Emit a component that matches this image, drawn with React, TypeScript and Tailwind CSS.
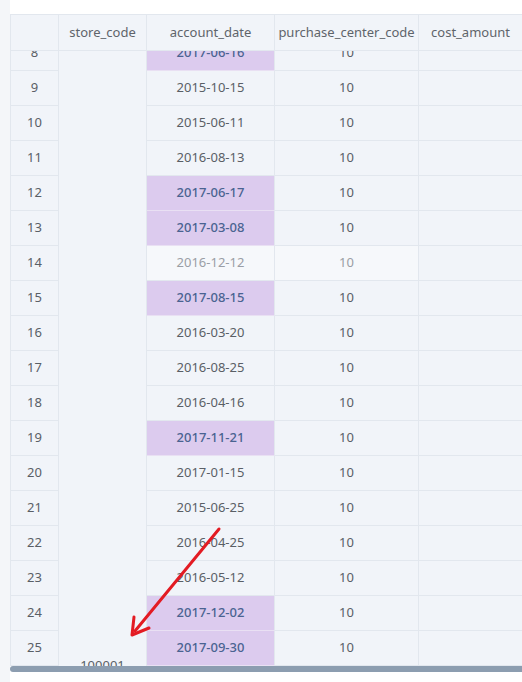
const rows: { n: number; date: string; hl?: boolean; dim?: boolean }[] = [
  { n: 8, date: '2017-06-16', hl: true },
  { n: 9, date: '2015-10-15' },
  { n: 10, date: '2015-06-11' },
  { n: 11, date: '2016-08-13' },
  { n: 12, date: '2017-06-17', hl: true },
  { n: 13, date: '2017-03-08', hl: true },
  { n: 14, date: '2016-12-12', dim: true },
  { n: 15, date: '2017-08-15', hl: true },
  { n: 16, date: '2016-03-20' },
  { n: 17, date: '2016-08-25' },
  { n: 18, date: '2016-04-16' },
  { n: 19, date: '2017-11-21', hl: true },
  { n: 20, date: '2017-01-15' },
  { n: 21, date: '2015-06-25' },
  { n: 22, date: '2016-04-25' },
  { n: 23, date: '2016-05-12' },
  { n: 24, date: '2017-12-02', hl: true },
  { n: 25, date: '2017-09-30', hl: true },
  { n: 26, date: '2016-11-04' },
];

const cell = 'flex h-[35px] items-center justify-center border-b border-r border-[#e2e7ee]';

export default function App() {
  return (
    <div
      className="relative flex h-[682px] w-[522px] overflow-hidden bg-white text-[13px] text-[#5a5f66]"
      style={{ fontFamily: '"Noto Sans", "Noto Sans CJK JP", sans-serif' }}
    >
      {/* left gutter */}
      <div className="w-[10px] shrink-0 bg-[#f4f6f9]" />

      <div className="flex min-w-0 flex-1 flex-col pt-[14px]">
        {/* header */}
        <div className="grid h-[37px] shrink-0 grid-cols-[49px_88px_128px_144px_1fr] border-b border-t border-[#e2e7ee] bg-[#f1f4f9] text-[#5f646b]">
          <div className="border-l border-r border-[#e2e7ee]" />
          <div className="flex items-center justify-center border-r border-[#e2e7ee]">store_code</div>
          <div className="flex items-center justify-center border-r border-[#e2e7ee]">account_date</div>
          <div className="flex items-center justify-center whitespace-nowrap border-r border-[#e2e7ee]">purchase_center_code</div>
          <div className="flex items-center justify-center whitespace-nowrap">cost_amount</div>
        </div>

        {/* body */}
        <div className="h-[615px] shrink-0 overflow-hidden bg-[#f1f4f9]">
          <div className="-mt-[15px] grid grid-cols-[49px_88px_128px_144px_1fr] auto-rows-[35px]">
            {rows.map((r, i) => (
              <div key={r.n} className="contents">
                <div className={`${cell} border-l`}>{r.n}</div>
                {i === 0 && (
                  <div className="row-span-19 flex items-end justify-center border-r border-[#e2e7ee] pb-[26px]">
                    100001
                  </div>
                )}
                <div
                  className={`${cell} ${
                    r.hl
                      ? 'border-b-[#e9e0f3] bg-[#dccbee] font-medium text-[#4a6391]'
                      : r.dim
                        ? 'bg-[#f6f8fb] text-[#9a9ea5]'
                        : ''
                  }`}
                >
                  {r.date}
                </div>
                <div className={`${cell} ${r.dim ? 'bg-[#f6f8fb] text-[#9a9ea5]' : ''}`}>10</div>
                <div className={`${cell} border-r-0`} />
              </div>
            ))}
          </div>
        </div>

        {/* horizontal scrollbar */}
        <div className="h-[6px] shrink-0 rounded-l-full bg-[#8c9db0]" />
        <div className="flex-1 bg-white" />
      </div>

      {/* annotation arrow */}
      <svg className="pointer-events-none absolute left-0 top-0" width="522" height="682">
        <line x1="219" y1="529" x2="135" y2="631" stroke="#e31b23" strokeWidth="3" strokeLinecap="round" />
        <polyline points="134,617 132,635 149,628" fill="none" stroke="#e31b23" strokeWidth="3" strokeLinecap="round" strokeLinejoin="round" />
      </svg>
    </div>
  );
}
